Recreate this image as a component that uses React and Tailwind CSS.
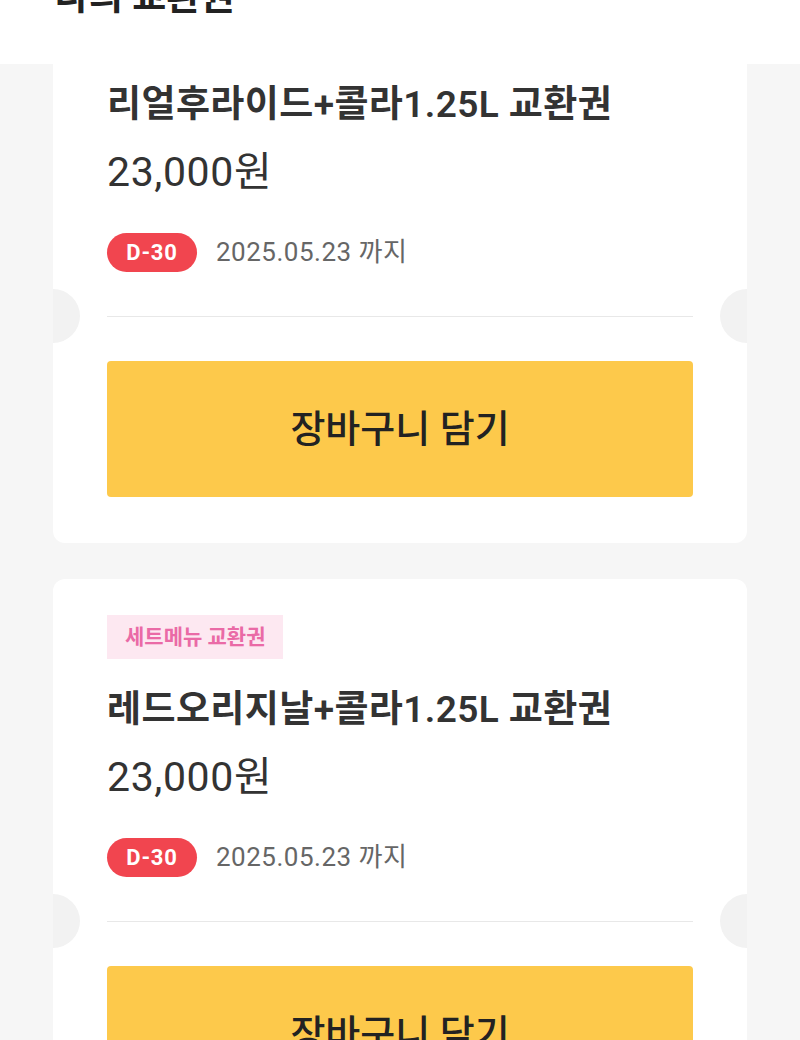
const COUPONS = [
  {
    id: 1,
    tag: '세트메뉴 교환권',
    name: '리얼후라이드+콜라1.25L 교환권',
    price: '23,000원',
    dday: 'D-30',
    until: '2025.05.23 까지',
  },
  {
    id: 2,
    tag: '세트메뉴 교환권',
    name: '레드오리지날+콜라1.25L 교환권',
    price: '23,000원',
    dday: 'D-30',
    until: '2025.05.23 까지',
  },
]

function CouponCard({ coupon }) {
  return (
    <div className="relative overflow-hidden bg-white rounded-[12px] px-[54px] pt-[36px] pb-[46px]">
      <span className="inline-block bg-[#fde8f1] text-[#ea6aa6] text-[21px] font-semibold leading-[44px] px-[18px]">
        {coupon.tag}
      </span>
      <p className="mt-[26px] text-[37px] font-semibold text-[#333] leading-[50px] tracking-[0.4px]">{coupon.name}</p>
      <p className="mt-[17px] text-[41px] text-[#333] leading-[50px] tracking-[0.6px]">{coupon.price}</p>
      <div className="mt-[36px] h-[39px] flex items-center gap-[19px]">
        <span className="bg-[#f1454f] text-white text-[22px] font-bold rounded-full w-[90px] h-[39px] leading-[39px] text-center tracking-[0.8px]">
          {coupon.dday}
        </span>
        <span className="text-[26px] text-[#666] leading-[39px] tracking-[0.5px]">{coupon.until}</span>
      </div>
      <div className="relative mt-[44px] h-px bg-[#e8e8e8]">
        <div className="absolute left-[-81px] top-[-27px] w-[54px] h-[54px] rounded-full bg-[#f2f2f2]" />
        <div className="absolute right-[-81px] top-[-27px] w-[54px] h-[54px] rounded-full bg-[#f2f2f2]" />
      </div>
      <button className="block mt-[44px] w-full h-[136px] bg-[#fdc94b] rounded-[4px] text-[38px] font-medium text-[#222]">
        장바구니 담기
      </button>
    </div>
  )
}

export default function App() {
  return (
    <div
      className="relative w-[800px] h-[1040px] overflow-hidden bg-[#f6f6f6]"
      style={{ fontFamily: 'Roboto, "Noto Sans CJK KR", "Noto Sans", sans-serif' }}
    >
      <div className="absolute top-0 left-0 right-0 h-[64px] bg-white z-10 overflow-hidden">
        <h1 className="mt-[-26px] ml-[55px] text-[37px] font-bold text-[#222] leading-[48px]">나의 교환권</h1>
      </div>
      <div className="mt-[-26px] mx-[53px] flex flex-col gap-[36px]">
        {COUPONS.map((c) => (
          <CouponCard key={c.id} coupon={c} />
        ))}
      </div>
    </div>
  )
}
